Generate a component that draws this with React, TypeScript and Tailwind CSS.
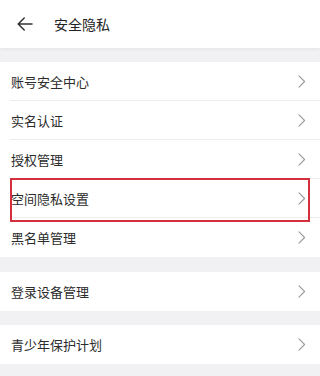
import React from "react";

const Chevron = () => (
  <svg width="8" height="13" viewBox="0 0 8 13" fill="none" className="shrink-0">
    <path d="M1 0.8 L6.6 6.5 L1 12.2" stroke="#9a9a9a" strokeWidth="1.1" strokeLinecap="round" strokeLinejoin="round" />
  </svg>
);

const Row = ({ label, last, highlight }: { label: string; last?: boolean; highlight?: boolean }) => (
  <div className="bg-white pl-[10px] relative">
    <div className={`h-[39px] flex items-center justify-between pr-[14px] ${last ? "" : "border-b border-[#ececec]"}`}>
      <span className="text-[13px] text-[#2c2c2c] pl-[1px] pt-[1px]">{label}</span>
      <Chevron />
    </div>
    {highlight && (
      <div className="absolute z-20 left-[10px] top-[-1px] w-[300px] h-[44px] border-2 border-[#d42f3a] pointer-events-none" />
    )}
  </div>
);

export default function App() {
  return (
    <div
      className="w-[320px] h-[376px] bg-[#f1f1f3] overflow-hidden"
      style={{ fontFamily: '"Noto Sans CJK SC", "Noto Sans", sans-serif' }}
    >
      <div className="h-[48px] bg-white flex items-center shadow-[0_1px_4px_rgba(0,0,0,0.06)] relative z-10">
        <svg width="16" height="14" viewBox="0 0 16 14" fill="none" className="ml-[17px]">
          <path d="M15 7 H1.5 M7.2 1 L1.2 7 L7.2 13" stroke="#333" strokeWidth="1.5" strokeLinecap="round" strokeLinejoin="round" />
        </svg>
        <span className="ml-[21px] text-[14px] text-[#222]">安全隐私</span>
      </div>
      <div className="h-[14px]" />
      <Row label="账号安全中心" />
      <Row label="实名认证" />
      <Row label="授权管理" />
      <Row label="空间隐私设置" highlight />
      <Row label="黑名单管理" last />
      <div className="h-[15px]" />
      <Row label="登录设备管理" last />
      <div className="h-[14px]" />
      <Row label="青少年保护计划" last />
    </div>
  );
}
